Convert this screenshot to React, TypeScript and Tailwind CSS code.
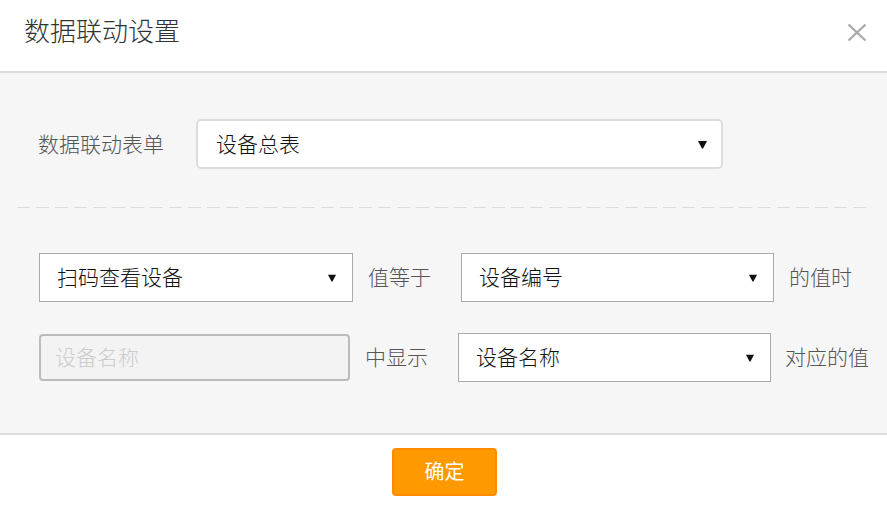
import React from "react";

const font = { fontFamily: '"Liberation Sans", "Noto Sans CJK SC", sans-serif' };

const Arrow: React.FC<{ size?: number }> = ({ size = 9 }) => (
  <svg width={size} height={size} viewBox="0 0 10 10" className="shrink-0">
    <polygon points="0,1 10,1 5.6,9.5 4.4,9.5" fill="#111" />
  </svg>
);

interface SelectProps {
  value: string;
  className?: string;
}

const SquareSelect: React.FC<SelectProps> = ({ value, className = "" }) => (
  <div
    className={`flex h-[49px] items-center justify-between border border-[#aaa] bg-white pl-[17px] pr-[16px] text-[21px] text-[#111] ${className}`}
  >
    <span className="leading-none">{value}</span>
    <Arrow size={8} />
  </div>
);

const App: React.FC = () => {
  return (
    <div className="flex h-[507px] w-[887px] flex-col bg-white font-light" style={font}>
      <div className="flex h-[73px] items-center justify-between border-b-2 border-[#ddd] pb-[7px] pl-[24px] pr-[20px]">
        <h1 className="text-[26px] font-light leading-none text-[#333]">数据联动设置</h1>
        <svg width="20" height="19" viewBox="0 0 20 19" className="mt-[1px]">
          <path d="M1.5 1.5 L18.5 17.5 M18.5 1.5 L1.5 17.5" stroke="#aaa" strokeWidth="2.4" />
        </svg>
      </div>

      <div className="flex h-[362px] flex-col border-b-2 border-[#ddd] bg-[#f6f6f6]">
        <div className="mt-[46px] flex items-center pl-[38px]">
          <span className="w-[158px] text-[21px] leading-none text-[#555]">数据联动表单</span>
          <div className="flex h-[50px] w-[527px] items-center justify-between rounded-[5px] border-2 border-[#ddd] bg-white pl-[18px] pr-[14px] text-[21px] text-[#111]">
            <span className="leading-none">设备总表</span>
            <Arrow size={9} />
          </div>
        </div>

        <div className="mx-[17px] mt-[38px] h-px bg-[repeating-linear-gradient(to_right,#dcdcdc_0_13px,transparent_13px_19px)]" />

        <div className="mt-[45px] flex items-center pl-[39px] text-[21px] text-[#555]">
          <SquareSelect value="扫码查看设备" className="w-[314px]" />
          <span className="ml-[15px] leading-none">值等于</span>
          <SquareSelect value="设备编号" className="ml-[30px] w-[313px]" />
          <span className="ml-[15px] leading-none">的值时</span>
        </div>

        <div className="mt-[31px] flex items-center pl-[39px] text-[21px] text-[#555]">
          <div className="flex h-[47px] w-[311px] items-center rounded-[4px] border-2 border-[#bbb] bg-[#f3f3f3] pl-[14px] text-[#ccc]">
            <span className="leading-none">设备名称</span>
          </div>
          <span className="ml-[15px] leading-none">中显示</span>
          <SquareSelect value="设备名称" className="ml-[30px] w-[313px]" />
          <span className="ml-[14px] leading-none">对应的值</span>
        </div>
      </div>

      <div className="flex flex-1 items-start justify-center pt-[13px]">
        <button className="ml-[2px] h-[48px] w-[105px] rounded-[4px] border-2 border-[#ff8a00] bg-[#ff9900] text-[20px] font-normal leading-none text-white">
          确定
        </button>
      </div>
    </div>
  );
};

export default App;
